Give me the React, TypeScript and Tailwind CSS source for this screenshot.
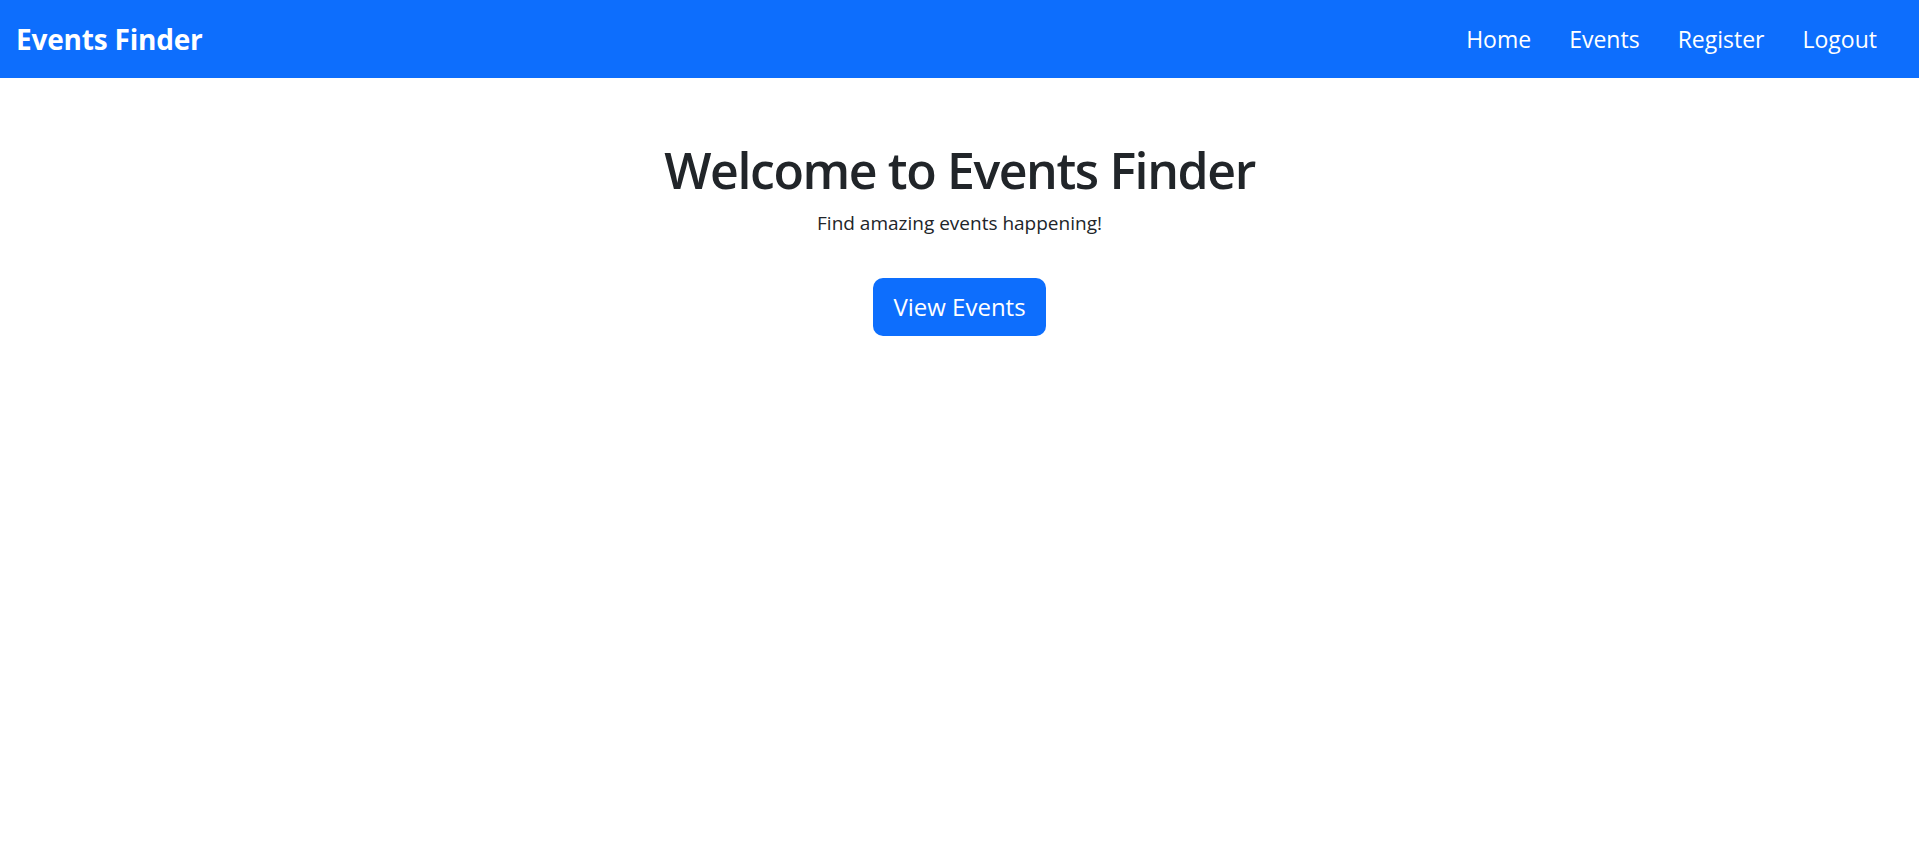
import React from "react"

const links = ["Home", "Events", "Register", "Logout"]

export default function App() {
  return (
    <div className="min-h-screen bg-white text-[#212529]" style={{ fontFamily: '"Open Sans", "Noto Sans", sans-serif' }}>
      <nav className="h-[78px] bg-[#0d6efd] flex items-center justify-between pl-4 pr-[23px]">
        <a href="#" className="text-white font-bold text-[28px] tracking-[-0.2px]">
          Events Finder
        </a>
        <ul className="flex items-center">
          {links.map((l) => (
            <li key={l}>
              <a href="#" className="block px-[19px] text-white text-[23px]">
                {l}
              </a>
            </li>
          ))}
        </ul>
      </nav>

      <main className="flex flex-col items-center pt-[62px]">
        <h1 className="text-[50px] font-semibold leading-[1.2] tracking-[-1.4px]">Welcome to Events Finder</h1>
        <p className="mt-[9px] text-[19px]">Find amazing events happening!</p>
        <button className="mt-[40px] h-[58px] px-[20px] rounded-[10px] bg-[#0d6efd] text-white text-[24px]">
          View Events
        </button>
      </main>
    </div>
  )
}
